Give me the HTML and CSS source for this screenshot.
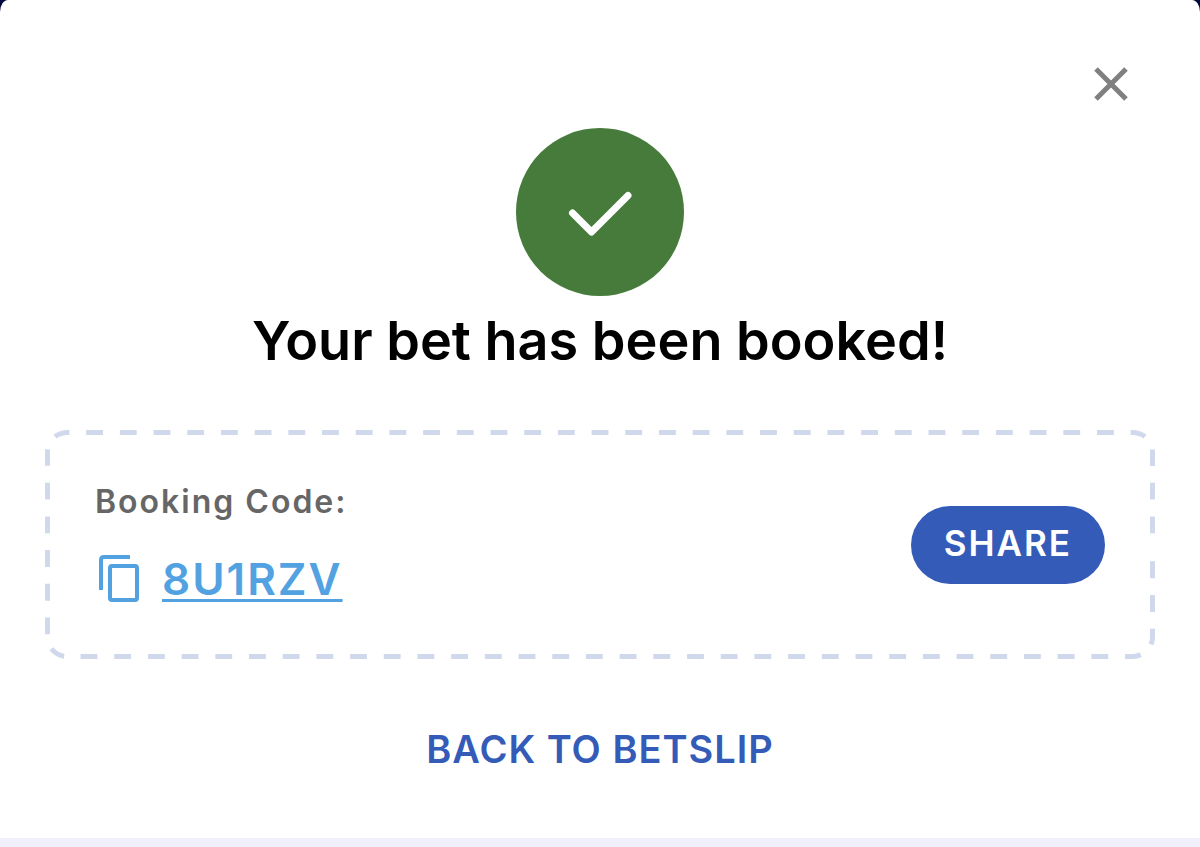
FILE: index.html
```
<!DOCTYPE html>
<html lang="en">
<head>
<meta charset="utf-8">
<meta name="viewport" content="width=device-width, initial-scale=1">
<title>Your bet has been booked!</title>
<link rel="stylesheet" href="styles.css">
</head>
<body>
<main class="modal">
	<div class="modal-top">
		<button type="button" class="close" aria-label="Close">
			<svg width="34" height="34" viewBox="0 0 34 34"><path d="M2 2L32 32M32 2L2 32"/></svg>
		</button>
	</div>
	<svg class="check" width="168" height="168" viewBox="0 0 168 168">
		<circle cx="84" cy="84" r="84"/>
		<path d="M56.500 85L75.500 104L112 67.500"/>
	</svg>
	<h1>Your bet has been booked!</h1>
	<section class="booking">
		<!-- dashed outline, the outer half of the stroke is clipped -->
		<svg class="outline" viewBox="0 0 1110 229" preserveAspectRatio="none">
			<path d="M1110 114.500V207A22 22 0 0 1 1088 229H22A22 22 0 0 1 0 207V22A22 22 0 0 1 22 0H1088A22 22 0 0 1 1110 22Z"/>
		</svg>
		<div class="booking-info">
			<p class="label">Booking Code:</p>
			<a class="code" href="#">
				<svg width="42" height="48" viewBox="0 0 42 48"><path d="M3 35V5Q3 2 6 2H32"/><rect x="12" y="11" width="27" height="34" rx="2"/></svg>
				<span>8U1RZV</span>
			</a>
		</div>
		<button type="button" class="share">SHARE</button>
	</section>
	<a class="back" href="#">BACK TO BETSLIP</a>
</main>
</body>
</html>
```
FILE: styles.css
```
*{margin:0;padding:0;box-sizing:border-box;}
body{background:#f0effb linear-gradient(#00093c,#00093c) top/100% 40px no-repeat;font-family:Inter,"Liberation Sans",sans-serif;}
svg{display:block;fill:none;}
button{border:0;background:none;font-family:inherit;cursor:pointer;}

.modal{display:flex;flex-direction:column;align-items:center;padding:60px 45px 65px;background:#fff;border-radius:8px 8px 0 0/12px 12px 0 0;}
.modal-top{display:flex;justify-content:flex-end;width:100%;padding-right:20px;margin-bottom:20px;}
.close{padding:7px;}
.close path{stroke:#808080;stroke-width:5;}

.check circle{fill:#467b3b;}
.check path{stroke:#fff;stroke-width:7;stroke-linecap:round;stroke-linejoin:round;}
h1{margin-top:12px;font-size:54px;line-height:66px;font-weight:600;color:#000;text-align:center;}

.booking{position:relative;display:flex;justify-content:space-between;align-items:center;width:100%;margin-top:56px;padding:50px;}
.outline{position:absolute;left:0;top:0;width:100%;height:100%;border-radius:22px;overflow:hidden;pointer-events:none;}
.outline path{stroke:#d0d8ec;stroke-width:10;stroke-dasharray:16.847;stroke-dashoffset:16.847;vector-effect:non-scaling-stroke;}
.label{font-size:32px;line-height:44px;font-weight:600;letter-spacing:2px;color:#666;}
.code{display:flex;align-items:center;gap:22px;margin-top:27px;margin-bottom:2px;padding-left:3px;font-size:44px;line-height:56px;font-weight:600;letter-spacing:2px;color:#52a2e2;text-decoration:none;}
.code span{text-decoration:underline;text-decoration-thickness:3px;text-underline-offset:4px;text-decoration-skip-ink:none;}
.code path,.code rect{stroke:#52a2e2;stroke-width:4;}
.share{height:78px;padding:0 33px 3px;border-radius:39px;background:#345bb7;color:#fff;font-size:35px;line-height:44px;font-weight:600;letter-spacing:2px;}
.back{margin-top:66px;font-size:38px;line-height:48px;font-weight:600;letter-spacing:1px;color:#345bb7;text-decoration:none;}
```
